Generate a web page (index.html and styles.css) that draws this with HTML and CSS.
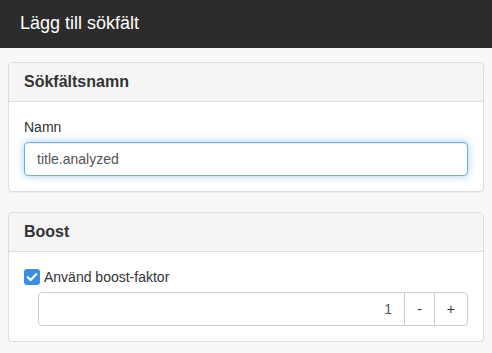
FILE: index.html
```html
<!DOCTYPE html>
<html lang="sv">
<head>
    <meta charset="UTF-8">
    <meta name="viewport" content="width=device-width, initial-scale=1.0">
    <title>Lägg till sökfält</title>
    <link rel="stylesheet" href="styles.css">
</head>
<body>
    <div class="topbar">
        <h1>Lägg till sökfält</h1>
    </div>

    <div class="content">
        <div class="panel">
            <div class="panel-heading">
                <h3>Sökfältsnamn</h3>
            </div>
            <div class="panel-body">
                <label class="field-label" for="fieldName">Namn</label>
                <input id="fieldName" class="form-control focused" type="text" value="title.analyzed">
            </div>
        </div>

        <div class="panel">
            <div class="panel-heading">
                <h3>Boost</h3>
            </div>
            <div class="panel-body">
                <label class="check">
                    <span class="check-box">
                        <svg width="16" height="16" viewBox="0 0 16 16">
                            <path d="M3.8 8.3 L6.6 11 L12.2 5.2" fill="none" stroke="#fff" stroke-width="2.2" stroke-linecap="round" stroke-linejoin="round"/>
                        </svg>
                    </span>
                    Använd boost-faktor
                </label>
                <div class="input-group">
                    <input class="boost-value" type="text" value="1">
                    <button class="step">-</button>
                    <button class="step last">+</button>
                </div>
            </div>
        </div>
    </div>
</body>
</html>
```

FILE: styles.css
```css
body {
    font-family: 'Liberation Sans', Arial, sans-serif;
    font-size: 14px;
    line-height: 20px;
    color: #333;
    background-color: #f8f8f8;
    margin: 0;
}

.topbar {
    background-color: #2c2c2c;
    height: 48px;
    padding: 0 20px;
}

.topbar h1 {
    margin: 0;
    font-size: 18px;
    font-weight: normal;
    line-height: 47px;
    color: #fff;
}

.content {
    padding: 14px 8px 0;
}

.panel {
    background-color: #fff;
    border: 1px solid #ddd;
    border-radius: 4px;
    box-shadow: 0 1px 1px rgba(0, 0, 0, 0.05);
    margin-bottom: 20px;
}

.panel:last-child {
    margin-bottom: 0;
}

.panel-heading {
    background-color: #f5f5f5;
    border-bottom: 1px solid #ddd;
    border-radius: 3px 3px 0 0;
    padding: 10px 15px;
}

.panel-heading h3 {
    margin: 0;
    font-size: 16px;
    font-weight: bold;
    line-height: 18px;
}

.panel-body {
    padding: 15px;
}

.field-label {
    display: block;
    margin-bottom: 5px;
}

.form-control {
    display: block;
    box-sizing: border-box;
    width: 100%;
    height: 34px;
    padding: 6px 12px;
    font-family: inherit;
    font-size: 14px;
    color: #555;
    background-color: #fff;
    border: 1px solid #ccc;
    border-radius: 4px;
    outline: none;
}

.form-control.focused {
    border-color: #66afe9;
    box-shadow: inset 0 1px 1px rgba(0, 0, 0, 0.075), 0 0 8px rgba(102, 175, 233, 0.6);
}

.check {
    display: flex;
    align-items: center;
    gap: 4px;
    margin-bottom: 5px;
}

.check-box {
    display: inline-block;
    width: 16px;
    height: 16px;
    border-radius: 3px;
    background-color: #3c8fe0;
}

.check-box svg {
    display: block;
}

.input-group {
    display: flex;
    margin-left: 14px;
    height: 34px;
}

.boost-value {
    flex: 1;
    box-sizing: border-box;
    height: 34px;
    padding: 6px 12px;
    font-family: inherit;
    font-size: 14px;
    color: #555;
    text-align: right;
    border: 1px solid #ccc;
    border-radius: 4px 0 0 4px;
    outline: none;
}

.step {
    box-sizing: border-box;
    height: 34px;
    padding: 6px 12px;
    margin-left: -1px;
    font-family: inherit;
    font-size: 14px;
    color: #333;
    background-color: #fff;
    border: 1px solid #ccc;
    border-radius: 0;
}

.step.last {
    border-radius: 0 4px 4px 0;
}
```
